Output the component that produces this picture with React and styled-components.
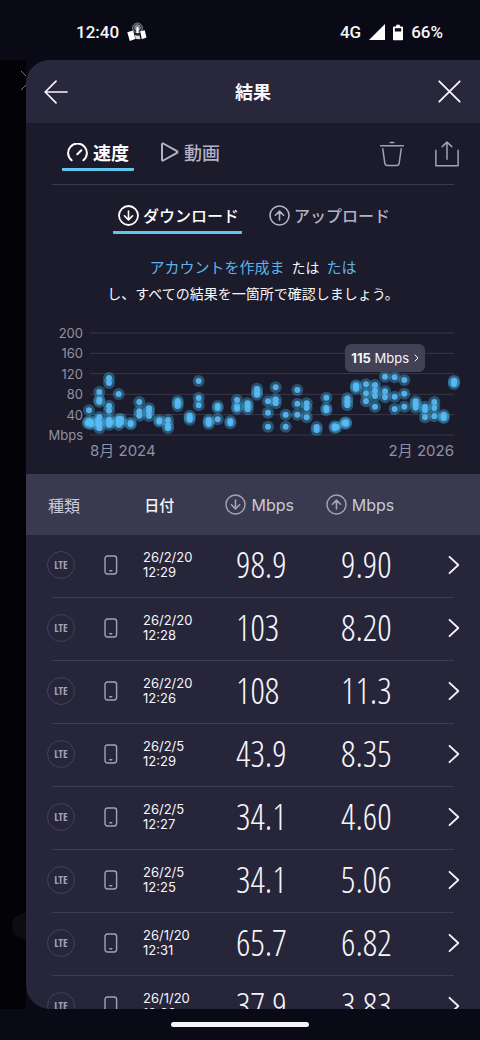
import { useState } from "react";
import styled, { createGlobalStyle } from "styled-components";

const GlobalStyle = createGlobalStyle`
  * {
    box-sizing: border-box;
  }
  body {
    margin: 0;
    background: #0a0a17;
    color: #f6f6fb;
    font-family: Inter, "Noto Sans CJK JP", sans-serif;
  }
  button {
    border: 0;
    padding: 0;
    background: transparent;
    color: inherit;
    font: inherit;
    cursor: pointer;
  }
  svg {
    display: block;
    flex: none;
  }
`;

const Page = styled.div`
  display: flex;
  flex-direction: column;
  height: 100vh;
  overflow: hidden;
`;

const StatusBar = styled.div`
  display: flex;
  flex: none;
  align-items: center;
  justify-content: space-between;
  height: 60px;
  padding: 4px 37px 0 76px;
  font: 500 17px/20px Roboto, sans-serif;
`;

const StatusGroup = styled.div`
  display: flex;
  align-items: center;
  gap: 8px;
`;

const Middle = styled.div`
  display: flex;
  flex: 1;
  min-height: 0;
`;

const Backdrop = styled.div`
  display: flex;
  flex: none;
  flex-direction: column;
  align-items: flex-end;
  justify-content: space-between;
  width: 26px;
  padding: 10px 0 70px;
  overflow: hidden;
  background: #030307;
  color: #77777f;
`;

const DimDot = styled.div`
  width: 14px;
  height: 26px;
  border-radius: 13px 0 0 13px;
  background: #0c0c11;
`;

const Sheet = styled.main`
  flex: 1;
  min-width: 0;
  overflow: hidden;
  border-radius: 24px 0 0 24px;
  background: #27253a;
`;

const SheetHeader = styled.header`
  display: flex;
  align-items: center;
  justify-content: space-between;
  height: 63px;
  padding: 0 19px 0 18px;
  background: #29273b;
`;

const Title = styled.h1`
  margin: 0;
  padding-top: 2px;
  font-size: 18px;
  font-weight: 700;
  line-height: 24px;
`;

const Panel = styled.section`
  height: 351px;
  background: #1b1b2b;
`;

const Toolbar = styled.div`
  display: flex;
  align-items: center;
  justify-content: space-between;
  height: 62px;
  margin: 0 26px;
  border-bottom: 1px solid #3c3b4e;
`;

const Tabs = styled.div`
  display: flex;
  gap: 22px;
  padding-left: 10px;
`;

const SubTabs = styled(Tabs)`
  justify-content: center;
  padding: 14px 0 0;
`;

const Tab = styled.button`
  display: flex;
  align-items: center;
  gap: 5px;
  height: 35px;
  padding: 0 5px;
  border-bottom: 3px solid ${(p) => (p.$active ? "#62c5ee" : "transparent")};
  border-radius: 1px;
  color: ${(p) => (p.$active ? "#ffffff" : "#b3b2c6")};
  font-size: 18px;
  font-weight: ${(p) => (p.$active ? 700 : 500)};
`;

const SubTab = styled(Tab)`
  gap: 4px;
  padding: 0 3px 0 5px;
  font-size: 16px;
  font-weight: 500;
`;

const Actions = styled.div`
  display: flex;
  gap: 31px;
  margin-right: -5px;
  color: #a3a2b6;
`;

const Notice = styled.p`
  margin: 21px 0 0;
  text-align: center;
  font-size: 14px;
  line-height: 26px;
`;

const NoticeLink = styled.a`
  padding: 0 3px;
  color: #5db4ea;
  font-size: 15px;
  text-decoration: none;
`;

const Chart = styled.div`
  display: grid;
  grid-template-columns: 57px 1fr;
  column-gap: 7px;
  margin: 18px 26px 0 0;
  color: #9190a4;
`;

const Axis = styled.div`
  display: flex;
  flex-direction: column;
  justify-content: space-between;
  height: 118px;
  text-align: right;
  font-size: 13px;
  line-height: 16px;
`;

const Plot = styled.div`
  position: relative;
  padding-top: 8px;

  svg {
    width: 100%;
    height: 102px;
    overflow: visible;
  }
`;

const Tooltip = styled.button`
  && {
    position: absolute;
    top: 19px;
    right: 29px;
    display: flex;
    align-items: center;
    gap: 5px;
    height: 28px;
    padding: 0 6px;
    border-radius: 6px;
    background: #424156;
    color: #f6f6fb;
    font-size: 13px;
  }
  svg {
    width: 5px;
    height: 8px;
  }
`;

const Range = styled.div`
  display: flex;
  grid-column: 2;
  justify-content: space-between;
  font-size: 15px;
  line-height: 16px;
`;

const Table = styled.table`
  display: block;
`;

const Head = styled.thead`
  display: block;
  background: #393a50;
`;

const HeadRow = styled.tr`
  display: grid;
  grid-template-columns: 96fr 81fr 100fr 134fr;
  align-items: center;
  height: 61px;
  padding: 0 20px 0 22px;
`;

const HeadCell = styled.th`
  display: flex;
  align-items: center;
  gap: 5px;
  padding: 0;
  color: ${(p) => (p.$strong ? "#f6f6fb" : "#c9c8da")};
  font-size: ${(p) => (p.$strong ? "15px" : "16px")};
  font-weight: ${(p) => (p.$strong ? 500 : 400)};

  svg {
    color: #a3a2b6;
  }
`;

const Body = styled.tbody`
  display: block;
`;

const Row = styled.tr`
  display: grid;
  grid-template-columns: 57fr 39fr 93fr 105fr 107fr 12fr;
  align-items: center;
  height: 63px;
  padding: 0 20px 4px 21px;
  background: linear-gradient(#3d3b50, #3d3b50) center bottom /
    calc(100% - 52px) 1px no-repeat;
`;

const Cell = styled.td`
  padding: 0;
  color: #a3a2b6;
`;

const Network = styled.div`
  display: flex;
  align-items: center;
  justify-content: center;
  width: 28px;
  height: 28px;
  border: 1px solid #434156;
  border-radius: 50%;
  font: 700 11px/12px "Open Sans Condensed", sans-serif;
`;

const DateCell = styled.td`
  padding: 0;
  font-size: 13px;
  line-height: 15px;
`;

const Speed = styled.td`
  padding: 0;
  font-family: "Open Sans Condensed Light", "Open Sans Condensed", sans-serif;
  font-size: 36px;
  font-weight: 300;
  line-height: 40px;
`;

const MoreButton = styled.button`
  display: block;
  color: #f6f6fb;
`;

const NavBar = styled.div`
  display: flex;
  flex: none;
  justify-content: center;
  height: 31px;
  padding-top: 13px;
`;

const NavPill = styled.div`
  width: 138px;
  height: 5px;
  border-radius: 3px;
  background: #f4f4f8;
`;

function Icon({ w, h, stroke = 2, children }) {
  return (
    <svg
      width={w}
      height={h}
      viewBox={`0 0 ${w} ${h}`}
      fill="none"
      stroke="currentColor"
      strokeWidth={stroke}
      strokeLinecap="round"
      strokeLinejoin="round"
      aria-hidden="true"
    >
      {children}
    </svg>
  );
}

const CircleArrow = ({ up, stroke = 1.8 }) => (
  <Icon w={21} h={21} stroke={stroke}>
    <circle cx="10.5" cy="10.5" r="9.5" />
    <path
      d={up ? "M10.5 15V6.2M6.4 10.2l4.1-4.1 4.1 4.1" : "M10.5 6v8.8M6.4 10.8l4.1 4.1 4.1-4.1"}
      strokeWidth="1.6"
    />
  </Icon>
);

const GaugeIcon = () => (
  <Icon w={21} h={19}>
    <path d="M4.6 17.3A9.4 9.4 0 1 1 16.4 17.3M10.3 11.2l4-4" />
  </Icon>
);

const PlayIcon = () => (
  <Icon w={18} h={20}>
    <path d="M1 2.2v15.6a.8.8 0 0 0 1.2.7L16 10.8a.9.9 0 0 0 0-1.6L2.2 1.5A.8.8 0 0 0 1 2.2z" />
  </Icon>
);

const MapIcon = () => (
  <svg width="20" height="20" viewBox="0 0 20 20" aria-hidden="true">
    <circle cx="10.5" cy="6" r="5" fill="#3b3b45" stroke="#77777f" />
    <circle cx="10.5" cy="5.5" r="2.6" fill="none" stroke="#a9a9b2" />
    <path d="M.3 10.2l5.8-1.6 2.2 8.4-5.5 2zM13.2 9.3l4.5-1.1 1.8 7.3-4.7 1.8z" fill="#fff" />
    <path d="M7.6 13.2l5 .2.9 3.9-4.7-.4z" fill="#d9d9de" />
    <path d="M10.5 4.5v6.5" stroke="#fff" strokeWidth="2.4" />
    <path d="M7.8 12.3c2 1 3.7.8 5.2-.3" fill="none" stroke="#33333d" />
  </svg>
);

// one entry per day: x on the time axis, then the y of every test
const points = [
  [-3, 232, 265, 270], [3, 268, 274], [-7, 270],
  [28, 177, 200, 206, 252, 268, 276, 286], [24, 262, 274],
  [57, 135, 150, 218, 233, 260, 268, 275], [62, 268],
  [86, 183, 258, 265, 275], [93, 258, 268], [122, 270, 274],
  [148, 207, 235, 248], [177, 226, 235, 249], [208, 262, 266],
  [234, 261, 277, 286], [263, 204, 210, 219], [299, 248, 254, 260],
  [326, 144, 195, 217], [356, 261, 267, 273], [383, 219, 225, 259],
  [421, 264, 271], [441, 201, 221, 227], [473, 211, 219, 229],
  [501, 167, 178, 185], [534, 205, 239, 281], [557, 163, 199, 211],
  [587, 245, 281], [622, 171, 212, 245], [650, 211, 225, 253],
  [680, 282, 291], [709, 194, 225, 232], [734, 280, 285], [740, 282],
  [763, 270], [768, 268, 272], [772, 196, 206, 217], [798, 157, 161, 167],
  [828, 154, 181, 205], [855, 156, 173, 189, 221], [885, 131, 175, 193],
  [914, 133, 191, 228], [943, 141, 182, 221], [977, 205, 212, 224],
  [1005, 221, 231, 253], [1033, 207, 225, 250], [1061, 246, 251, 255],
  [1092, 143, 148, 153],
];
const dots = points.flatMap(([x, ...ys]) => ys.map((y) => [x, y]));

const results = [
  ["26/2/20", "12:29", "98.9", "9.90"],
  ["26/2/20", "12:28", "103", "8.20"],
  ["26/2/20", "12:26", "108", "11.3"],
  ["26/2/5", "12:29", "43.9", "8.35"],
  ["26/2/5", "12:27", "34.1", "4.60"],
  ["26/2/5", "12:25", "34.1", "5.06"],
  ["26/1/20", "12:31", "65.7", "6.82"],
  ["26/1/20", "12:30", "37.9", "3.83"],
];

function SpeedChart() {
  return (
    <Chart>
      <Axis>
        {["200", "160", "120", "80", "40", "Mbps"].map((label) => (
          <span key={label}>{label}</span>
        ))}
      </Axis>
      <Plot>
        <svg viewBox="0 0 1092 306" preserveAspectRatio="none" role="img" aria-label="Mbps">
          {[0, 61, 122, 184, 245, 306].map((y) => (
            <path key={y} d={`M0 ${y}H1092`} stroke="#393849" strokeWidth="3" />
          ))}
          {dots.map(([x, y], i) => (
            <circle key={i} cx={x} cy={y} r="18" fill="#3c9fce" fillOpacity="0.42" />
          ))}
          {dots.map(([x, y], i) => (
            <circle key={i} cx={x} cy={y} r="9" fill="#5bb9f3" fillOpacity="0.9" />
          ))}
        </svg>
        <Tooltip>
          <span>
            <b>115</b> Mbps
          </span>
          <Icon w={5} h={8} stroke={1}>
            <path d="M1 1l3 3-3 3" />
          </Icon>
        </Tooltip>
      </Plot>
      <Range>
        <span>8月 2024</span>
        <span>2月 2026</span>
      </Range>
    </Chart>
  );
}

function App() {
  const [tab, setTab] = useState("speed");
  const [direction, setDirection] = useState("down");

  return (
    <Page>
      <GlobalStyle />
      <StatusBar>
        <StatusGroup>
          <span>12:40</span>
          <MapIcon />
        </StatusGroup>
        <StatusGroup>
          <span>4G</span>
          <svg width="16" height="16" viewBox="0 0 16 16" fill="#fff" aria-hidden="true">
            <path d="M0 16L16 0v16z" />
          </svg>
          <svg width="10" height="17" viewBox="0 0 11 17" aria-hidden="true">
            <path d="M3.5 0h4v1.8H10a1 1 0 0 1 1 1V16a1 1 0 0 1-1 1H1a1 1 0 0 1-1-1V2.8a1 1 0 0 1 1-1h2.5z" fill="#fff" />
            <path d="M2 3.8h7v3.6H2z" fill="#0a0a17" />
          </svg>
          <span>66%</span>
        </StatusGroup>
      </StatusBar>

      <Middle>
        <Backdrop>
          <Icon w={5} h={21} stroke={1}>
            <path d="M0 1l10 10M0 20l10-10" />
          </Icon>
          <DimDot />
        </Backdrop>

        <Sheet>
          <SheetHeader>
            <button aria-label="戻る">
              <Icon w={24} h={24}>
                <path d="M23 12H1.5M12 1.2L1.2 12 12 22.8" strokeWidth="1.7" />
              </Icon>
            </button>
            <Title>結果</Title>
            <button aria-label="閉じる">
              <Icon w={23} h={23}>
                <path d="M1.3 1.3l20.4 20.4M21.7 1.3L1.3 21.7" strokeWidth="1.8" />
              </Icon>
            </button>
          </SheetHeader>

          <Panel>
            <Toolbar>
              <Tabs>
                <Tab $active={tab === "speed"} onClick={() => setTab("speed")}>
                  <GaugeIcon />
                  速度
                </Tab>
                <Tab $active={tab === "video"} onClick={() => setTab("video")}>
                  <PlayIcon />
                  動画
                </Tab>
              </Tabs>
              <Actions>
                <button aria-label="削除">
                  <Icon w={24} h={26} stroke={1.5}>
                    <path d="M.7 4.8h22.6M10.2 1.4h3.6M2.8 7.8l2 14.4a2.6 2.6 0 0 0 2.6 2.2h9.2a2.6 2.6 0 0 0 2.6-2.2l2-14.4" />
                  </Icon>
                </button>
                <button aria-label="共有">
                  <Icon w={24} h={26} stroke={1.5}>
                    <path d="M.9 9.3v15.4h22.2V9.3M12 18.2V1.4M7.2 5.6L12 1.1l4.8 4.5" />
                  </Icon>
                </button>
              </Actions>
            </Toolbar>

            <SubTabs>
              <SubTab $active={direction === "down"} onClick={() => setDirection("down")}>
                <CircleArrow />
                ダウンロード
              </SubTab>
              <SubTab $active={direction === "up"} onClick={() => setDirection("up")}>
                <CircleArrow up stroke={1.6} />
                アップロード
              </SubTab>
            </SubTabs>

            <Notice>
              <NoticeLink href="#signup">アカウントを作成ま</NoticeLink> たは{" "}
              <NoticeLink href="#login">たは</NoticeLink>
              <br />
              し、すべての結果を一箇所で確認しましょう。
            </Notice>

            <SpeedChart />
          </Panel>

          <Table>
            <Head>
              <HeadRow>
                <HeadCell>種類</HeadCell>
                <HeadCell $strong>日付</HeadCell>
                <HeadCell>
                  <CircleArrow stroke={1.4} />
                  Mbps
                </HeadCell>
                <HeadCell>
                  <CircleArrow up stroke={1.4} />
                  Mbps
                </HeadCell>
              </HeadRow>
            </Head>
            <Body>
              {results.map(([date, time, down, up]) => (
                <Row key={date + time}>
                  <Cell>
                    <Network>LTE</Network>
                  </Cell>
                  <Cell>
                    <Icon w={14} h={20} stroke={1.4}>
                      <rect x="1" y="1" width="11.6" height="18" rx="2.4" />
                      <path d="M5.8 15.8h2" />
                    </Icon>
                  </Cell>
                  <DateCell>
                    {date}
                    <br />
                    {time}
                  </DateCell>
                  <Speed>{down}</Speed>
                  <Speed>{up}</Speed>
                  <Cell>
                    <MoreButton aria-label="詳細">
                      <Icon w={12} h={20} stroke={1.8}>
                        <path d="M1.5 1.8L10.3 10l-8.8 8.2" />
                      </Icon>
                    </MoreButton>
                  </Cell>
                </Row>
              ))}
            </Body>
          </Table>
        </Sheet>
      </Middle>

      <NavBar>
        <NavPill />
      </NavBar>
    </Page>
  );
}

export default App;
